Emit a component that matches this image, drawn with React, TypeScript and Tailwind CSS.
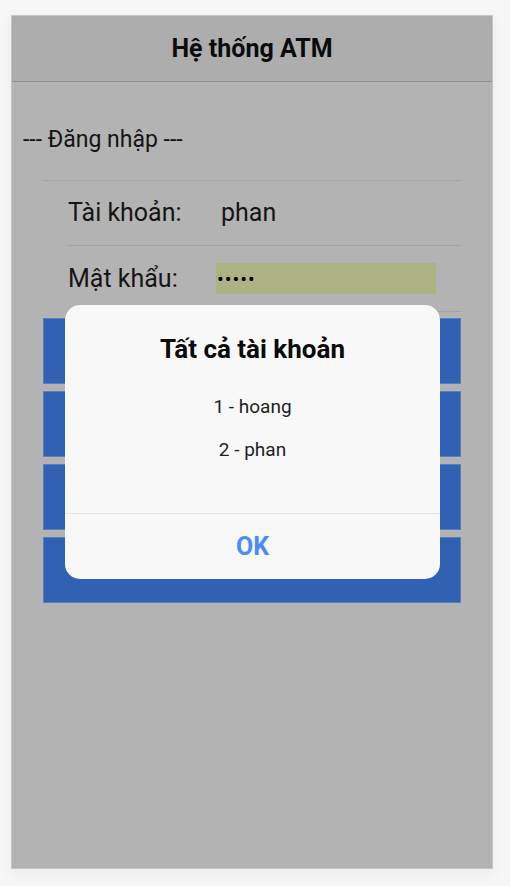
import React from 'react';

const accounts = [
  { id: 1, name: 'hoang' },
  { id: 2, name: 'phan' },
];

const buttons = ['Đăng nhập', 'Đăng ký', 'Quên mật khẩu', 'Xem tất cả'];

export default function App() {
  return (
    <div
      className="min-h-[886px] bg-[#f7f7f7] pt-[15px] pl-[11px]"
      style={{ fontFamily: 'Roboto, "Noto Sans", sans-serif' }}
    >
      <div className="relative w-[482px] h-[854px] border border-[#c6c6c6] bg-[#b3b3b3] shadow-[0_4px_16px_rgba(0,0,0,0.06)] overflow-hidden">
        {/* header */}
        <div className="h-[66px] bg-[#adadad] border-b border-[#8e8e8e] flex items-center justify-center">
          <h1 className="text-[25px] font-bold text-[#0b0b0b]">Hệ thống ATM</h1>
        </div>

        {/* login form */}
        <div className="pt-[45px]">
          <p className="pl-[11px] text-[23px] leading-[26px] text-[#141414]">--- Đăng nhập ---</p>

          <div className="mx-[31px] mt-[27px] border-t border-[#a2a2a2]">
            <div className="ml-[24px] h-[65px] flex items-center border-b border-[#a2a2a2]">
              <span className="w-[149px] pl-px text-[25px] text-[#151515]">Tài khoản:</span>
              <span className="pl-[5px] text-[25px] text-[#151515]">phan</span>
            </div>
            <div className="ml-[24px] h-[66px] flex items-center border-b border-[#a2a2a2]">
              <span className="w-[149px] pl-px text-[25px] text-[#151515]">Mật khẩu:</span>
              <div className="w-[220px] h-[31px] bg-[#adb285] flex items-center pl-px text-[20px] tracking-[1px] text-black">
                •••••
              </div>
            </div>
          </div>

          <div className="mx-[31px] mt-[6px] flex flex-col gap-[7px]">
            {buttons.map((b) => (
              <div
                key={b}
                className="h-[66px] bg-[#3161b3] border border-[#5a7dbb] flex items-center justify-center pb-[1px] text-[22px] font-medium text-[#b3b3b3]"
              >
                {b}
              </div>
            ))}
          </div>
        </div>

        {/* dialog */}
        <div className="absolute left-[53px] top-[289px] w-[375px] h-[274px] bg-[#f8f8f8] rounded-[15px] flex flex-col">
          <h2 className="pt-[29px] text-center text-[26px] leading-[30px] font-bold text-[#0a0a0a]">Tất cả tài khoản</h2>
          <div className="mt-[32px] flex flex-col items-center gap-[21px]">
            {accounts.map((a) => (
              <p key={a.id} className="text-[19px] leading-[22px] text-[#1e1e1e]">
                {a.id} - {a.name}
              </p>
            ))}
          </div>
          <div className="mt-auto h-[66px] border-t border-[#e6e6e6] flex items-center justify-center">
            <span className="text-[25px] font-bold text-[#4a8cf3]">OK</span>
          </div>
        </div>
      </div>
    </div>
  );
}
